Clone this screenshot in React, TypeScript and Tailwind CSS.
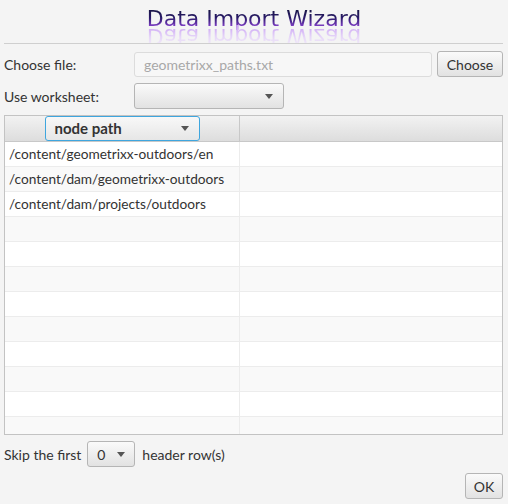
import React from "react";

const Arrow = () => (
  <svg width="8" height="5" viewBox="0 0 8 5" className="shrink-0">
    <path d="M0 0 L8 0 L4 5 Z" fill="#555" />
  </svg>
);

const rows = [
  "/content/geometrixx-outdoors/en",
  "/content/dam/geometrixx-outdoors",
  "/content/dam/projects/outdoors",
  "", "", "", "", "", "", "", "", "",
];

export default function App() {
  return (
    <div
      className="w-[508px] h-[504px] bg-[#f4f4f4] text-[14px] text-[#333] flex flex-col overflow-hidden"
      style={{ fontFamily: "Lato, 'Noto Sans', sans-serif" }}
    >
      {/* Title */}
      <div
        className="h-[43px] overflow-hidden flex flex-col items-center"
        style={{ fontFamily: "'DejaVu Sans', sans-serif" }}
      >
        <div className="mt-[8px] text-[22px] leading-[22px] bg-[linear-gradient(180deg,#15153d_0%,#2a1a6a_45%,#a64ff0_100%)] bg-clip-text text-transparent">
          Data Import Wizard
        </div>
        <div className="-mt-[5px] text-[22px] leading-[22px] bg-[linear-gradient(0deg,#c9a0f4_0%,#e6d6f8_55%,#f3eef8_100%)] bg-clip-text text-transparent [transform:scaleY(-1)]">
          Data Import Wizard
        </div>
      </div>
      <div className="ml-[4px] mr-[5px] h-px bg-[#cfcfcf]" />

      {/* Choose file */}
      <div className="mt-[7px] pl-[4px] pr-[5px] flex items-center h-[26px]">
        <div className="w-[130px]">Choose file:</div>
        <div className="flex-1 h-[25px] border border-[#dcdcdc] rounded-[3px] bg-[#f7f7f7] flex items-center pl-[9px] text-[#a8a8a8]">
          geometrixx_paths.txt
        </div>
        <button className="ml-[5px] w-[66px] h-[26px] border border-[#b5b5b5] rounded-[3px] bg-[linear-gradient(180deg,#fafafa,#e2e2e2)] text-[#333] flex items-center justify-center">
          Choose
        </button>
      </div>

      {/* Worksheet */}
      <div className="mt-[6px] pl-[4px] pr-[5px] flex items-center h-[26px]">
        <div className="w-[130px]">Use worksheet:</div>
        <div className="w-[150px] h-[26px] border border-[#b5b5b5] rounded-[3px] bg-[linear-gradient(180deg,#fafafa,#e2e2e2)] flex items-center justify-end pr-[10px]">
          <Arrow />
        </div>
      </div>

      {/* Table */}
      <div className="mt-[6px] ml-[4px] mr-[5px] h-[320px] border border-[#c3c3c3] bg-white flex flex-col overflow-hidden text-[13.7px]">
        <div className="h-[26px] shrink-0 flex border-b border-[#c8c8c8] bg-[linear-gradient(180deg,#f2f2f2,#dddddd)]">
          <div className="w-[235px] border-r border-[#c8c8c8] flex items-center justify-center">
            <div className="w-[155px] h-[25px] border border-[#3fa6de] rounded-[3px] bg-[linear-gradient(180deg,#f8f8f8,#e6e6e6)] flex items-center justify-between pl-[9px] pr-[10px] font-bold text-[15px] text-[#333]">
              <span>node path</span>
              <Arrow />
            </div>
          </div>
          <div className="flex-1" />
        </div>
        {rows.map((r, i) => (
          <div
            key={i}
            className={`h-[25px] shrink-0 flex border-b border-[#ececec] ${i % 2 === 0 ? "bg-white" : "bg-[#f9f9f9]"}`}
          >
            <div className="w-[235px] border-r border-[#ececec] flex items-center pl-[4px] text-[#333] whitespace-nowrap overflow-hidden">
              {r}
            </div>
            <div className="flex-1" />
          </div>
        ))}
      </div>

      {/* Skip */}
      <div className="mt-[6px] pl-[4px] flex items-center h-[26px]">
        <span>Skip the first</span>
        <div className="ml-[6px] w-[48px] h-[26px] border border-[#b5b5b5] rounded-[3px] bg-[linear-gradient(180deg,#fafafa,#e2e2e2)] flex items-center justify-between pl-[9px] pr-[9px]">
          <span>0</span>
          <Arrow />
        </div>
        <span className="ml-[7px]">header row(s)</span>
      </div>

      {/* OK */}
      <div className="mt-[6px] pr-[5px] flex justify-end">
        <button className="w-[38px] h-[26px] border border-[#b5b5b5] rounded-[3px] bg-[linear-gradient(180deg,#fafafa,#e2e2e2)] text-[#333] flex items-center justify-center">
          OK
        </button>
      </div>
    </div>
  );
}
